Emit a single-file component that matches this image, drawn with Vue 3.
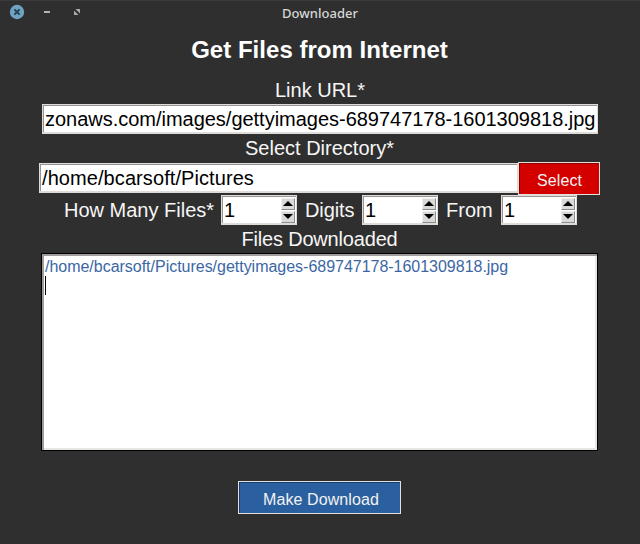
<script setup>
import { ref } from 'vue'

const url = ref('zonaws.com/images/gettyimages-689747178-1601309818.jpg')
const directory = ref('/home/bcarsoft/Pictures')
const counters = ref([
  { label: 'How Many Files*', value: 1, size: 'wide' },
  { label: 'Digits', value: 1, size: 'medium' },
  { label: 'From', value: 1, size: 'small' },
])
const downloaded = ref(['/home/bcarsoft/Pictures/gettyimages-689747178-1601309818.jpg'])
</script>

<template>
  <div class="window">
    <header class="titlebar">
      <svg class="controls" width="90" height="26" viewBox="0 0 90 26">
        <circle cx="17" cy="12" r="7.2" fill="#6ea3c2" />
        <path d="M14.4 9.4l5.2 5.2M19.6 9.4l-5.2 5.2" stroke="#244250" stroke-width="2" />
        <path d="M44 12h6" stroke="#b4b4b4" stroke-width="2" />
        <path d="M75.5 9H80v4.5zM74 10.5V15h4.5z" fill="#aaa" />
      </svg>
      <span class="caption">Downloader</span>
    </header>
    <h1 class="title">Get Files from Internet</h1>
    <div class="label link">Link URL*</div>
    <div class="field url">{{ url }}</div>
    <div class="label select-dir">Select Directory*</div>
    <div class="directory">
      <div class="field path">{{ directory }}</div>
      <button class="btn red">Select</button>
    </div>
    <div class="counters">
      <template v-for="c in counters" :key="c.label">
        <span class="label" :class="c.size">{{ c.label }}</span>
        <div class="field spin">
          <span class="num">{{ c.value }}</span>
          <div class="arrows">
            <span class="arrow"><svg width="10" height="5" viewBox="0 0 10 5"><path d="M5 0l5 5H0z" /></svg></span>
            <span class="arrow"><svg width="10" height="5" viewBox="0 0 10 5"><path d="M0 0h10L5 5z" /></svg></span>
          </div>
        </div>
      </template>
    </div>
    <div class="label files">Files Downloaded</div>
    <div class="log">
      <div v-for="f in downloaded" :key="f" class="line">{{ f }}</div>
      <div class="caret"></div>
    </div>
    <button class="btn blue">Make Download</button>
  </div>
</template>

<style>
body { background: #2f2f2f; }
</style>

<style scoped>
* { box-sizing: border-box; }
.window {
  width: 640px;
  height: 544px;
  overflow: hidden;
  display: flex;
  flex-direction: column;
  align-items: center;
  padding-right: 1px;
  background: #2f2f2f;
  border-top: 1px solid #3b3b3b;
  font-family: "Liberation Sans", Arial, sans-serif;
  color: #f6f6f6;
}
.titlebar {
  width: 100%;
  height: 26px;
  display: grid;
  grid-template-columns: 90px 1fr 90px;
  flex: none;
}
.controls { display: block; margin-top: -1px; }
.caption {
  text-align: center;
  padding-left: 1px;
  font: 500 13px/25px "Noto Sans", sans-serif;
  letter-spacing: 0.05px;
  color: #d6d6d6;
}
.title {
  margin: 0;
  height: 50px;
  font-size: 24px;
  line-height: 45px;
  font-weight: bold;
  letter-spacing: 0.03px;
  color: #fff;
  white-space: nowrap;
}
.label { font-size: 20px; line-height: 28px; white-space: nowrap; }
.link { height: 27px; line-height: 26px; padding-left: 1px; }
.field {
  height: 30px;
  border: 1px solid #dedbd8;
  border-bottom-width: 2px;
  box-shadow: inset 1px 1px 0 #979392;
  background: #fff;
  color: #000;
  font-size: 20px;
  line-height: 29px;
  white-space: nowrap;
  overflow: hidden;
}
.url { width: 556px; margin-left: 1px; padding-left: 2px; letter-spacing: -0.02px; }
.select-dir { height: 28px; line-height: 28px; }
.directory { display: flex; width: 561px; height: 33px; align-items: flex-start; }
.path { width: 479px; margin-top: 1px; padding-left: 2px; letter-spacing: 0.08px; }
.btn {
  margin: 0;
  border: 1px solid #e4dfdd;
  font-family: inherit;
  font-size: 16px;
  letter-spacing: 0.1px;
  color: #f2f2f2;
  text-align: center;
  flex: none;
}
.red { width: 82px; height: 33px; padding: 4px 0 0 1px; background: #d40000; box-shadow: inset 1px 1px 0 #8e0000; }
.counters { display: flex; height: 30px; width: 513px; line-height: 30px; }
.counters .label { line-height: 30px; padding-left: 8px; flex: none; }
.counters .wide { width: 158px; padding-left: 1px; }
.counters .medium { width: 65px; letter-spacing: -0.1px; }
.counters .small { width: 63px; }
.spin { width: 76px; display: flex; justify-content: space-between; flex: none; }
.num { padding-left: 2px; }
.arrows { display: flex; flex-direction: column; gap: 1px; padding: 2px 1px 0 0; }
.arrow {
  width: 14px;
  height: 12px;
  display: flex;
  align-items: flex-start;
  justify-content: center;
  padding-top: 2px;
  background: #d9d9d9;
  border: 1px solid #eee;
  border-right-color: #8b8b8b;
  border-bottom-color: #8b8b8b;
}
.arrow svg { flex: none; }
.files { height: 28px; line-height: 28px; letter-spacing: -0.18px; }
.log {
  width: 557px;
  height: 198px;
  flex: none;
  background: #fff;
  border: 1px solid #000;
  box-shadow: inset 2px 2px 0 #a09c9b, inset -2px -2px 0 #e5e5e2;
  padding: 4px 3px;
}
.line { font-size: 16px; line-height: 18px; letter-spacing: -0.02px; color: #3b67a5; white-space: nowrap; }
.caret { width: 1px; height: 19px; background: #000; }
.blue { width: 163px; height: 33px; margin-top: 30px; padding: 4px 0 0 3px; background: #2a609f; box-shadow: inset 1px 1px 0 #1c3f70; }
</style>
